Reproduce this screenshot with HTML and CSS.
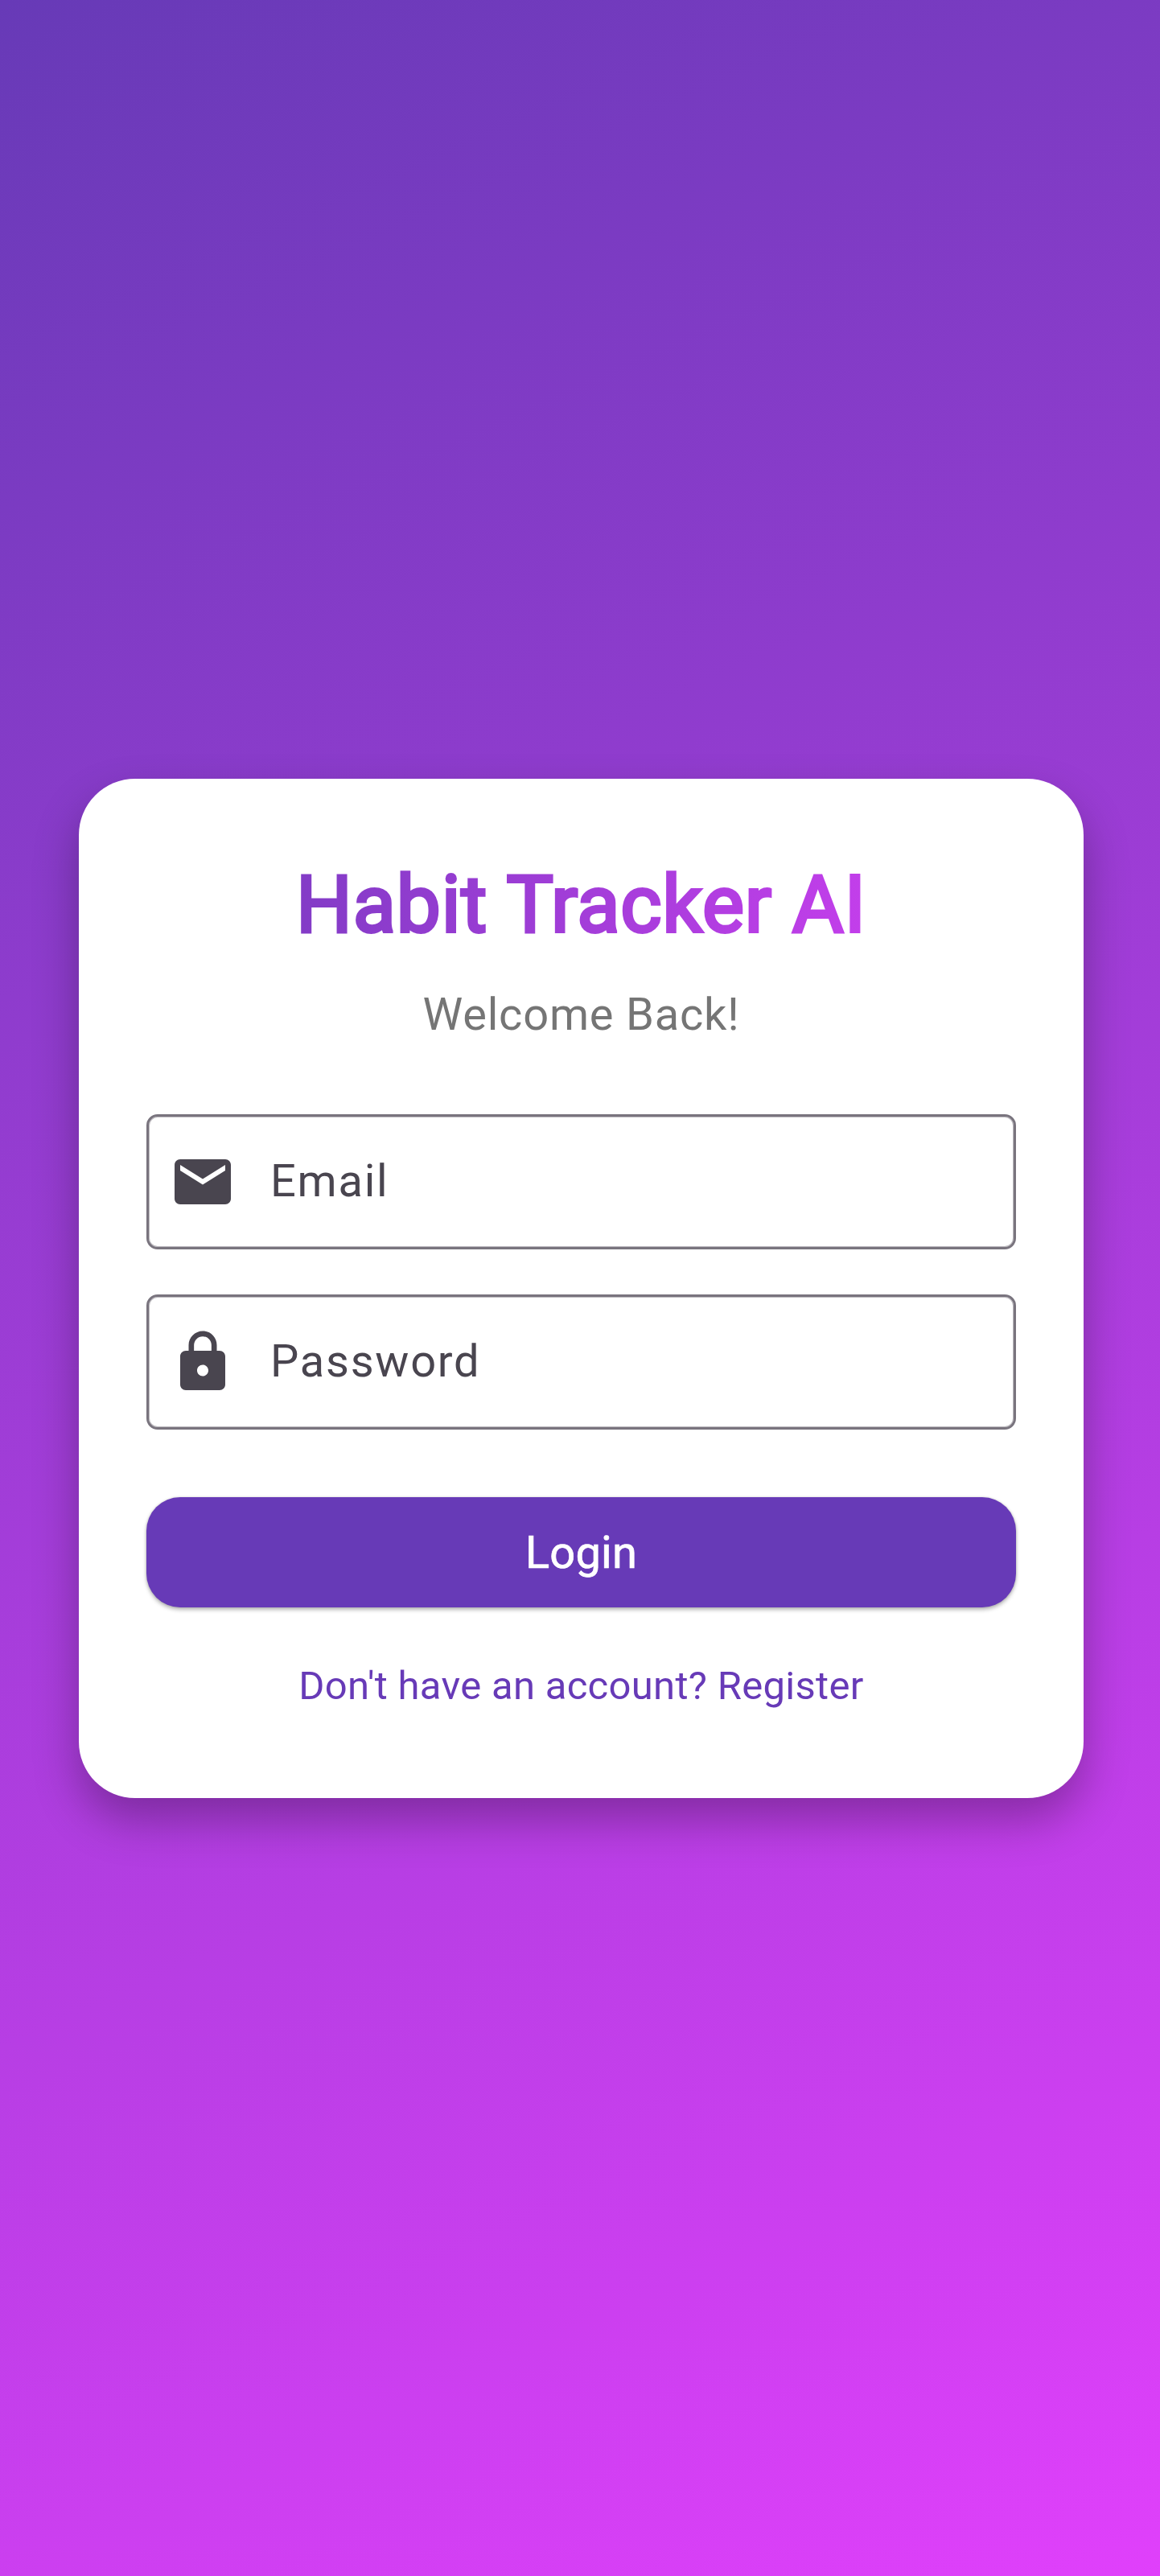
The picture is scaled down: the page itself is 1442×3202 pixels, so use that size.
FILE: index.html
```html
<!DOCTYPE html>
<html lang="en">
<head>
  <meta charset="utf-8">
  <title>Habit Tracker AI</title>
  <link rel="stylesheet" href="styles.css">
</head>
<body>
  <main class="screen">
    <section class="card">
      <h1 class="title">Habit Tracker AI</h1>
      <p class="subtitle">Welcome Back!</p>
      <div class="field">
        <svg class="field-icon" viewBox="0 0 24 24" aria-hidden="true"><path d="M20 4H4c-1.1 0-1.99.9-1.99 2L2 18c0 1.1.9 2 2 2h16c1.1 0 2-.9 2-2V6c0-1.1-.9-2-2-2zm0 4l-8 5-8-5V6l8 5 8-5v2z"/></svg>
        <span class="field-label">Email</span>
      </div>
      <div class="field">
        <svg class="field-icon" viewBox="0 0 24 24" aria-hidden="true"><path d="M18 8h-1V6c0-2.76-2.24-5-5-5S7 3.24 7 6v2H6c-1.1 0-2 .9-2 2v10c0 1.1.9 2 2 2h12c1.1 0 2-.9 2-2V10c0-1.1-.9-2-2-2zm-6 9c-1.1 0-2-.9-2-2s.9-2 2-2 2 .9 2 2-.9 2-2 2zm3.1-9H8.900V6c0-1.710 1.390-3.100 3.100-3.100 1.710 0 3.100 1.390 3.100 3.100v2z"/></svg>
        <span class="field-label">Password</span>
      </div>
      <button class="login" type="button">Login</button>
      <a class="register">Don't have an account? Register</a>
    </section>
  </main>
</body>
</html>
```
FILE: styles.css
```css
* { box-sizing: border-box; }

body {
  margin: 0;
  font-family: Roboto, "Noto Sans", sans-serif;
  font-weight: 400;
}

.screen {
  display: flex;
  align-items: flex-start;
  height: 3202px;
  padding: 968px 95px 0 98px;
  background: linear-gradient(155.76deg, #673ab7, #e040fb);
}

.card {
  display: flex;
  flex-direction: column;
  width: 1249px;
  height: 1267px;
  padding: 84px;
  border-radius: 70px;
  background: #fff;
  box-shadow: 0 28px 56px rgba(0, 0, 0, 0.29);
}

.title {
  margin: 0;
  background: linear-gradient(94deg, #673ab7 -116px, #e040fb 1224px);
  -webkit-background-clip: text;
  background-clip: text;
  color: transparent;
  -webkit-text-stroke: 3.8px transparent;
  font-size: 98px;
  font-weight: 400;
  line-height: 145px;
  letter-spacing: 0.8px;
  text-align: center;
}

.subtitle {
  margin: 24px 0 84px;
  color: #757575;
  font-size: 56px;
  line-height: 80px;
  letter-spacing: 0.8px;
  text-align: center;
}

.field {
  display: flex;
  align-items: center;
  gap: 42px;
  height: 168px;
  margin-bottom: 56px;
  padding-left: 25px;
  border: 3px solid #79747e;
  border-radius: 14px;
  box-shadow: inset 0 0 0 1px rgba(121, 116, 126, 0.5);
}

.field-icon {
  width: 84px;
  height: 84px;
  fill: #49454f;
}

.field-label {
  padding-bottom: 2px;
  color: #49454f;
  font-size: 56px;
  line-height: 80px;
  letter-spacing: 1.75px;
}

.login {
  height: 137px;
  margin: 28px 0 63px;
  padding: 0;
  border: 0;
  border-radius: 42px;
  background: #673ab7;
  box-shadow: 0 3px 5px rgba(0, 0, 0, 0.28), 0 0 3px rgba(0, 0, 0, 0.16);
  color: #fff;
  font: inherit;
  font-size: 56px;
  line-height: 80px;
  letter-spacing: 0.2px;
  -webkit-text-stroke: 0.7px #fff;
}

.register {
  color: #673ab7;
  font-size: 49px;
  line-height: 70px;
  letter-spacing: 0.3px;
  text-align: center;
}
```
